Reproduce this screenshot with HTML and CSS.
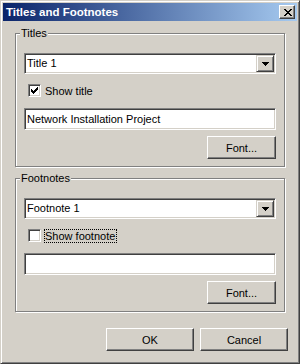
FILE: index.html
```html
<!DOCTYPE html>
<html lang="en">
<head>
    <meta charset="UTF-8">
    <title>Titles and Footnotes</title>
    <link rel="stylesheet" href="styles.css">
</head>
<body>
    <div class="window">
        <div class="titlebar">
            <span class="title">Titles and Footnotes</span>
            <button class="close-btn" aria-label="Close">
                <svg width="8" height="7" viewBox="0 0 8 7"><path d="M0 0h2v1h-2z M6 0h2v1h-2z M1 1h2v1h-2z M5 1h2v1h-2z M2 2h4v1h-4z M3 3h2v1h-2z M2 4h4v1h-4z M1 5h2v1h-2z M5 5h2v1h-2z M0 6h2v1h-2z M6 6h2v1h-2z" fill="#000"/></svg>
            </button>
        </div>

        <div class="client">
            <div class="group">
                <div class="group-label">Titles</div>
                <div class="combo">
                    <span class="combo-value">Title 1</span>
                    <span class="combo-btn">
                        <svg width="7" height="4" viewBox="0 0 7 4"><path d="M0 0h7v1h-7z M1 1h5v1h-5z M2 2h3v1h-3z M3 3h1v1h-1z" fill="#000"/></svg>
                    </span>
                </div>
                <div class="check">
                    <span class="check-box">
                        <svg width="7" height="7" viewBox="0 0 7 7"><path d="M0 2h1v3h-1z M1 3h1v3h-1z M2 4h1v3h-1z M3 3h1v3h-1z M4 2h1v3h-1z M5 1h1v3h-1z M6 0h1v3h-1z" fill="#000"/></svg>
                    </span>
                    <span class="check-label">Show title</span>
                </div>
                <div class="edit">Network Installation Project</div>
                <div class="row-end">
                    <button class="btn btn-font">Font...</button>
                </div>
            </div>

            <div class="group">
                <div class="group-label">Footnotes</div>
                <div class="combo">
                    <span class="combo-value">Footnote 1</span>
                    <span class="combo-btn">
                        <svg width="7" height="4" viewBox="0 0 7 4"><path d="M0 0h7v1h-7z M1 1h5v1h-5z M2 2h3v1h-3z M3 3h1v1h-1z" fill="#000"/></svg>
                    </span>
                </div>
                <div class="check">
                    <span class="check-box"></span>
                    <span class="check-label focus">Show footnote</span>
                </div>
                <div class="edit"></div>
                <div class="row-end">
                    <button class="btn btn-font">Font...</button>
                </div>
            </div>

            <div class="buttons">
                <button class="btn btn-dlg">OK</button>
                <button class="btn btn-dlg">Cancel</button>
            </div>
        </div>
    </div>
</body>
</html>
```

FILE: styles.css
```css
* {
    box-sizing: border-box;
}
body {
    margin: 0;
    font: 11px "Liberation Sans", Arial, sans-serif;
    color: #000;
    background: #d4d0c8;
}
.window {
    width: 300px;
    height: 364px;
    padding: 2px;
    background: #d4d0c8;
    border: 1px solid;
    border-color: #d4d0c8 #404040 #404040 #d4d0c8;
    box-shadow: inset 1px 1px #fff, inset -1px -1px #808080;
}
.titlebar {
    height: 18px;
    display: flex;
    align-items: center;
    justify-content: space-between;
    padding: 0 2px 0 3px;
    background: linear-gradient(to right, #0a246a, #a6caf0);
}
.title {
    color: #fff;
    font-size: 11.5px;
    font-weight: bold;
}
.close-btn {
    width: 16px;
    height: 14px;
    padding: 0 0 0 1px;
    display: flex;
    align-items: center;
    justify-content: center;
    background: #d4d0c8;
    border: 1px solid;
    border-color: #fff #404040 #404040 #fff;
    box-shadow: inset -1px -1px #808080, inset 1px 1px #d4d0c8;
}
.close-btn svg {
    display: block;
}
.client {
    padding: 12px 12px 0;
}
.group {
    display: flex;
    flex-direction: column;
    padding: 0 8px 7px;
    border: 1px solid #808080;
    box-shadow: inset 1px 1px #fff, 1px 1px #fff;
}
.group + .group {
    margin-top: 11px;
}
.group-label {
    align-self: flex-start;
    margin: -7px 0 0 -4px;
    padding: 0 1px;
    line-height: 13px;
    background: #d4d0c8;
}
.combo {
    margin-top: 13px;
    height: 21px;
    padding: 1px;
    display: flex;
    background: #fff;
    border: 1px solid;
    border-color: #808080 #fff #fff #808080;
    box-shadow: inset 1px 1px #404040, inset -1px -1px #d4d0c8;
}
.combo-value {
    flex: 1;
    padding-left: 1px;
    line-height: 17px;
}
.combo-btn {
    width: 18px;
    display: flex;
    align-items: center;
    justify-content: center;
    background: #d4d0c8;
    border: 1px solid;
    border-color: #d4d0c8 #404040 #404040 #d4d0c8;
    box-shadow: inset 1px 1px #fff, inset -1px -1px #808080;
}
.combo-btn svg,
.check-box svg {
    display: block;
}
.check {
    margin: 10px 0 0 4px;
    height: 13px;
    display: flex;
    align-items: center;
    gap: 3px;
}
.check-box {
    width: 13px;
    height: 13px;
    padding: 2px;
    background: #fff;
    border: 1px solid;
    border-color: #808080 #fff #fff #808080;
    box-shadow: inset 1px 1px #404040, inset -1px -1px #d4d0c8;
}
.check-label {
    padding-right: 1px;
    line-height: 12px;
    border: 1px dotted transparent;
}
.check-label.focus {
    border-color: #000;
}
.edit {
    margin-top: 11px;
    height: 22px;
    padding: 0 2px;
    line-height: 20px;
    white-space: nowrap;
    background: #fff;
    border: 1px solid;
    border-color: #808080 #fff #fff #808080;
    box-shadow: inset 1px 1px #404040, inset -1px -1px #d4d0c8;
}
.row-end {
    display: flex;
    justify-content: flex-end;
    margin-top: 6px;
}
.btn {
    height: 23px;
    padding: 0;
    font: inherit;
    color: #000;
    background: #d4d0c8;
    border: 1px solid;
    border-color: #fff #404040 #404040 #fff;
    box-shadow: inset -1px -1px #808080, inset 1px 1px #d4d0c8;
}
.btn-font {
    width: 69px;
}
.buttons {
    display: flex;
    justify-content: flex-end;
    gap: 6px;
    margin: 16px -3px 0 0;
}
.btn-dlg {
    width: 88px;
}
```
